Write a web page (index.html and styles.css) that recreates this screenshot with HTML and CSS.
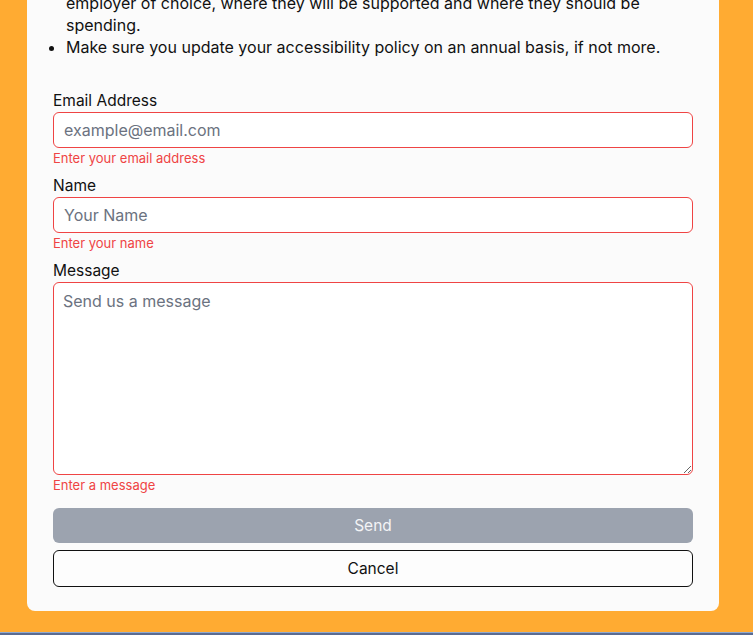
FILE: index.html
```html
<!DOCTYPE html>
<html lang="en">
<head>
<meta charset="utf-8">
<title>Contact us</title>
<link rel="stylesheet" href="styles.css">
</head>
<body>
<div class="page">
  <main class="card">
    <ul class="tips">
      <li>Build an inclusive workplace and service so that your organisation becomes an<br>employer of choice, where they will be supported and where they should be spending.</li>
      <li>Make sure you update your accessibility policy on an annual basis, if not more.</li>
    </ul>
    <form class="form" novalidate>
      <div class="field">
        <label for="email">Email Address</label>
        <input id="email" type="email" placeholder="example@email.com">
        <span class="error">Enter your email address</span>
      </div>
      <div class="field">
        <label for="name">Name</label>
        <input id="name" type="text" placeholder="Your Name">
        <span class="error">Enter your name</span>
      </div>
      <div class="field">
        <label for="message">Message</label>
        <textarea id="message" placeholder="Send us a message"></textarea>
        <span class="error">Enter a message</span>
      </div>
      <div class="actions">
        <button type="submit" class="btn btn-send" disabled>Send</button>
        <button type="button" class="btn btn-cancel">Cancel</button>
      </div>
    </form>
  </main>
</div>
<div class="strip"></div>
</body>
</html>
```
FILE: styles.css
```css
* { box-sizing: border-box; }
html, body { margin: 0; padding: 0; }
body {
  background: #ffab32;
  font-family: Inter, "Liberation Sans", sans-serif;
  color: #111111;
  font-size: 16px;
  overflow: hidden;
}
.page {
  padding: 0 34px 21px 27px;
}
.card {
  background: #fbfbfb;
  border-radius: 0 0 8px 8px;
  padding: 0 26px 24px;
  margin-top: -30px;
}
.tips {
  margin: 0;
  padding: 0 0 0 13px;
  line-height: 22px;
}
.form {
  margin-top: 33px;
  display: flex;
  flex-direction: column;
  gap: 9px;
}
.field {
  display: flex;
  flex-direction: column;
}
.field label {
  font-size: 15.5px;
  line-height: 20px;
  margin-bottom: 1px;
}
.field input,
.field textarea {
  font: inherit;
  color: #111;
  background: #ffffff;
  border: 1px solid #ef4444;
  border-radius: 6px;
  padding: 0 10px;
  height: 36px;
  outline: none;
}
.field textarea {
  height: 193px;
  padding: 8px 9px;
  resize: vertical;
}
.field input::placeholder,
.field textarea::placeholder {
  color: #6b7280;
}
.error {
  font-size: 13px;
  line-height: 18px;
  margin-top: 1px;
  color: #ef4444;
}
.actions {
  margin-top: 5px;
  display: flex;
  flex-direction: column;
  gap: 7px;
}
.btn {
  font: inherit;
  font-size: 15.5px;
  border-radius: 6px;
  width: 100%;
}
.btn-send {
  height: 35px;
  background: #9ca3af;
  color: #f3f4f6;
  border: none;
}
.btn-cancel {
  height: 37px;
  background: #fdfdfd;
  color: #111;
  border: 1px solid #111;
}
.strip {
  height: 20px;
  background: linear-gradient(#8fa9d0 0 1px, #5b6b91 1px);
}
```
